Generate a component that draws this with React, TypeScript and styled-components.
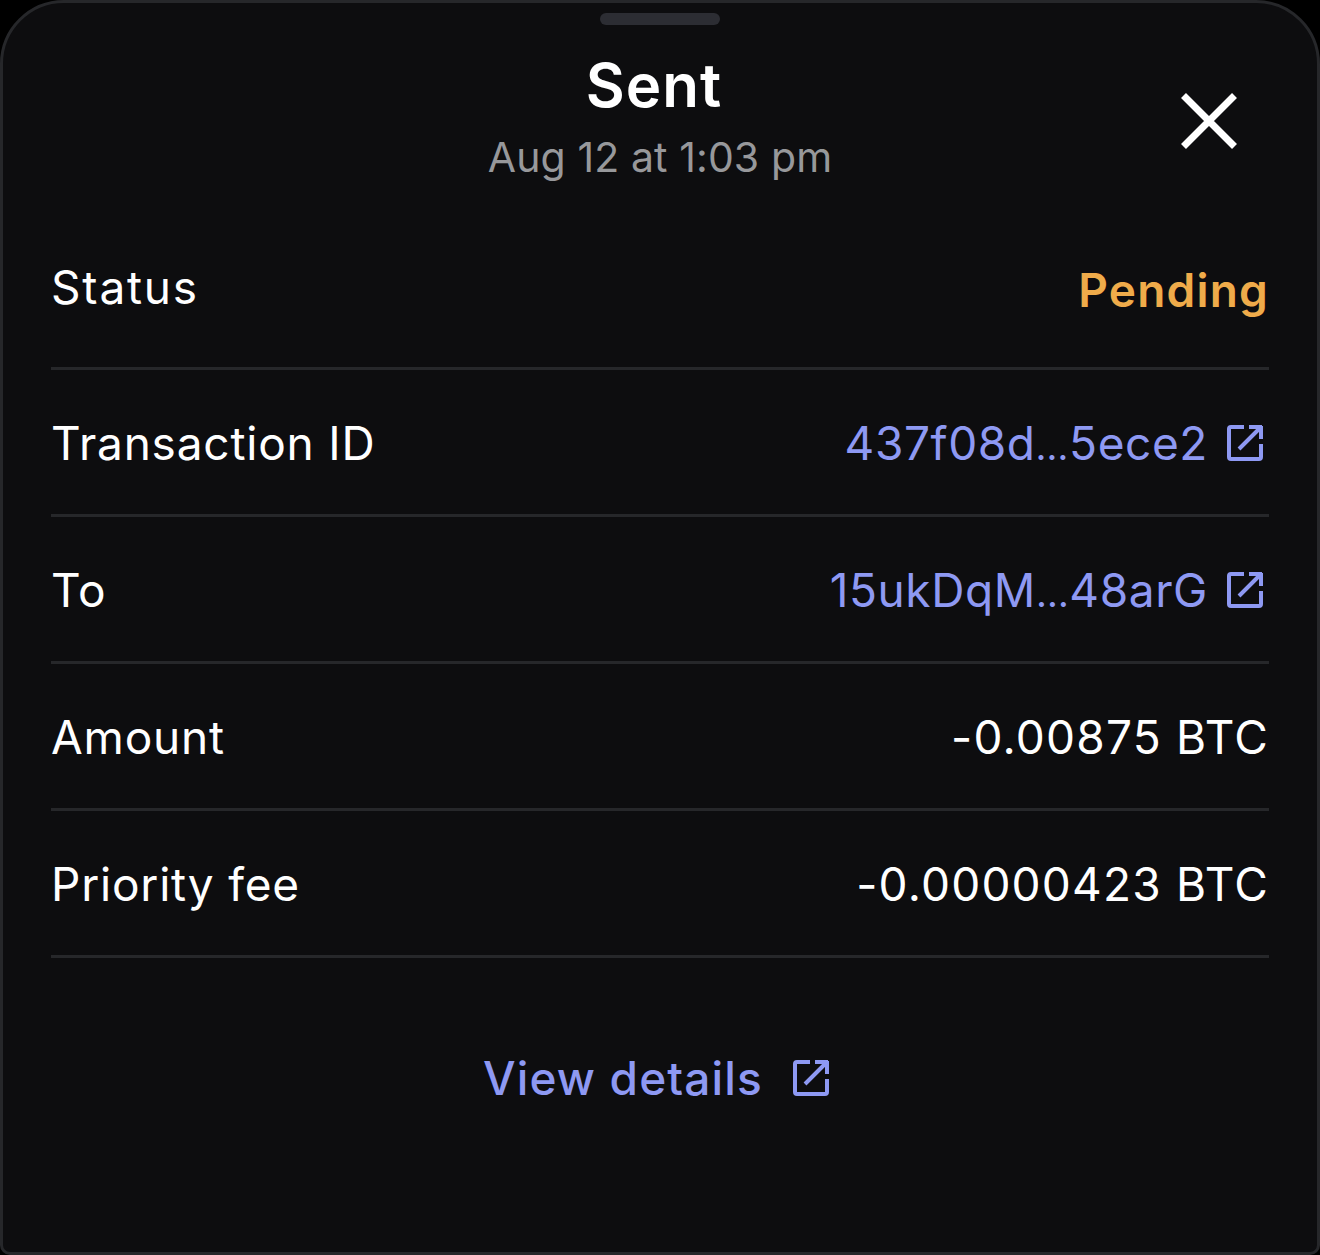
import React from 'react';
import styled, { createGlobalStyle } from 'styled-components';

const Global = createGlobalStyle`
  html, body { margin: 0; padding: 0; background: #000; }
  body { font-family: Inter, "Liberation Sans", sans-serif; }
`;

const Sheet = styled.div`
  position: relative;
  box-sizing: border-box;
  width: 1320px;
  height: 1255px;
  background: #0d0d0f;
  border: 3px solid #26272a;
  border-radius: 64px 64px 10px 10px;
  padding: 10px 48px 0;
  display: flex;
  flex-direction: column;
  overflow: hidden;
`;

const Handle = styled.div`
  align-self: center;
  width: 120px;
  height: 12px;
  border-radius: 6px;
  background: #2c2d33;
`;

const Header = styled.header`
  display: flex;
  flex-direction: column;
  align-items: center;
  margin-top: 26px;
  height: 172px;
`;

const Title = styled.h1`
  margin: 0;
  font-size: 60px;
  line-height: 68px;
  font-weight: 600;
  letter-spacing: 1px;
  color: #fff;
  transform: translateX(-6px);
`;

const Subtitle = styled.div`
  font-size: 41px;
  line-height: 50px;
  letter-spacing: 0.1px;
  color: #97989b;
  margin-top: 13px;
`;

const Close = styled.button`
  position: absolute;
  top: 90px;
  right: 80px;
  width: 56px;
  height: 56px;
  padding: 0;
  background: none;
  border: none;
  display: flex;
`;

const Rows = styled.div`
  display: flex;
  flex-direction: column;
`;

const Row = styled.div<{ $lifted?: boolean }>`
  box-sizing: border-box;
  height: 147px;
  display: flex;
  align-items: center;
  justify-content: space-between;
  padding-top: ${p => (p.$lifted ? 0 : 2)}px;
  padding-bottom: ${p => (p.$lifted ? 10 : 0)}px;
  border-bottom: 3px solid #26272a;
  font-size: 46px;
  letter-spacing: 0.8px;
  color: #fff;
`;

const StatusLabel = styled.span`
  letter-spacing: 1.8px;
  margin-bottom: 6px;
`;

const Value = styled.div<{ $tone?: 'link' | 'pending' }>`
  display: flex;
  align-items: center;
  gap: 18px;
  font-weight: ${p => (p.$tone === 'pending' ? 600 : 400)};
  letter-spacing: ${p => (p.$tone === 'link' ? 0.6 : 1.2)}px;
  color: ${p => (p.$tone === 'link' ? '#8e99f3' : p.$tone === 'pending' ? '#efab4a' : '#fff')};
`;

const Ellipsis = styled.span`
  font-size: 38px;
`;

const DetailsLink = styled.a`
  align-self: center;
  display: flex;
  align-items: center;
  gap: 29px;
  margin-top: 92px;
  font-size: 46px;
  font-weight: 500;
  letter-spacing: 1.15px;
  color: #8e99f3;
  transform: translateX(-1px);
`;

const IconFrame = styled.svg`
  flex: none;
  margin-right: 5px;
`;

const External = () => (
  <IconFrame width="38" height="38" viewBox="0 0 38 38" fill="none" stroke="#8e99f3" strokeWidth="4">
    <path d="M18 3H5a2 2 0 0 0-2 2V33a2 2 0 0 0 2 2H33a2 2 0 0 0 2-2V20" />
    <path d="M13 25L35 3M23 3H36M35 2V15" />
  </IconFrame>
);

export default function App() {
  return (
    <>
      <Global />
      <Sheet>
        <Handle />
        <Header>
          <Title>Sent</Title>
          <Subtitle>Aug 12 at 1:03 pm</Subtitle>
        </Header>
        <Close aria-label="Close">
          <svg width="56" height="56" viewBox="0 0 56 56" stroke="#fff" strokeWidth="7">
            <path d="M2.5 2.5L53.5 53.5M53.5 2.5L2.5 53.5" />
          </svg>
        </Close>
        <Rows>
          <Row $lifted>
            <StatusLabel>Status</StatusLabel>
            <Value $tone="pending">Pending</Value>
          </Row>
          <Row>
            <span>Transaction ID</span>
            <Value $tone="link"><span>437f08d<Ellipsis>…</Ellipsis>5ece2</span> <External /></Value>
          </Row>
          <Row>
            <span>To</span>
            <Value $tone="link"><span>15ukDqM<Ellipsis>…</Ellipsis>48arG</span> <External /></Value>
          </Row>
          <Row>
            <span>Amount</span>
            <Value>-0.00875 BTC</Value>
          </Row>
          <Row>
            <span>Priority fee</span>
            <Value>-0.00000423 BTC</Value>
          </Row>
        </Rows>
        <DetailsLink>View details <External /></DetailsLink>
      </Sheet>
    </>
  );
}
